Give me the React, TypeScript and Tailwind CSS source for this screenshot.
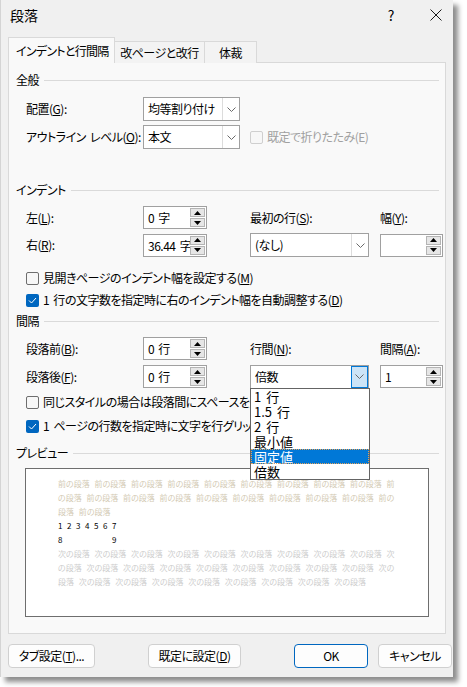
import React from "react";

const UP = (
  <svg width="7" height="4" viewBox="0 0 7 4">
    <path d="M0 4 L3.5 0 L7 4Z" fill="#000" />
  </svg>
);
const DOWN = (
  <svg width="7" height="4" viewBox="0 0 7 4">
    <path d="M0 0 L3.5 4 L7 0Z" fill="#000" />
  </svg>
);

function Chevron() {
  return (
    <svg width="9" height="5" viewBox="0 0 9 5">
      <polyline points="0.5,0.5 4.5,4.5 8.5,0.5" fill="none" stroke="#6a6a6a" strokeWidth="1" />
    </svg>
  );
}

function Spin({ value, w = "w-[64px]" }: { value: string; w?: string }) {
  return (
    <div className={`flex h-[23px] ${w} items-stretch border border-[#a0a0a0] bg-white`}>
      <div className="flex-1 overflow-hidden whitespace-nowrap pl-[4px] leading-[21px]">{value}</div>
      <div className="flex w-[16px] flex-col gap-[1px] py-[1px] pr-[1px]">
        <div className="flex flex-1 items-center justify-center border border-[#b4b4b4] bg-[#e6e6e6]">{UP}</div>
        <div className="flex flex-1 items-center justify-center border border-[#b4b4b4] bg-[#e6e6e6]">{DOWN}</div>
      </div>
    </div>
  );
}

function Select({ value, w, active }: { value: string; w: string; active?: boolean }) {
  return (
    <div className={`flex h-[24px] ${w} items-stretch border border-[#a0a0a0] bg-white`}>
      <div className="flex-1 overflow-hidden whitespace-nowrap pl-[4px] leading-[22px]">{value}</div>
      <div
        className={`flex w-[17px] items-center justify-center ${
          active ? "border border-[#0078d7] bg-[#cce4f7]" : "border-l border-[#dcdcdc]"
        }`}
      >
        <Chevron />
      </div>
    </div>
  );
}

function Check({ checked, disabled, children }: { checked?: boolean; disabled?: boolean; children: React.ReactNode }) {
  return (
    <div className={`flex items-center gap-[4px] whitespace-nowrap ${disabled ? "text-[#a0a0a0]" : ""}`}>
      {checked ? (
        <div className="flex h-[13px] w-[13px] shrink-0 items-center justify-center rounded-[2px] bg-[#0067c0]">
          <svg width="9" height="7" viewBox="0 0 9 7">
            <polyline points="1,3.5 3.5,6 8,1" fill="none" stroke="#fff" strokeWidth="1" />
          </svg>
        </div>
      ) : (
        <div
          className={`h-[13px] w-[13px] shrink-0 rounded-[2px] border bg-[#f7f7f7] ${
            disabled ? "border-[#cfcfcf]" : "border-[#6e6e6e]"
          }`}
        />
      )}
      <span>{children}</span>
    </div>
  );
}

function Heading({ children }: { children: React.ReactNode }) {
  return (
    <div className="flex h-[16px] items-center pl-[7px] pr-[6px]">
      <span className="whitespace-nowrap">{children}</span>
      <div className="ml-[5px] h-px flex-1 bg-[#dadada]" />
    </div>
  );
}

function Btn({ children, primary, w }: { children: React.ReactNode; primary?: boolean; w: string }) {
  return (
    <div
      className={`flex h-[24px] ${w} items-center justify-center whitespace-nowrap rounded-[4px] bg-[#fdfdfd] ${
        primary ? "border-[1.5px] border-[#0067c0]" : "border border-[#d0d0d0]"
      }`}
    >
      {children}
    </div>
  );
}

const MAE = "text-[#d3cab4]";
const TSUGI = "text-[#cdcdcd]";

export default function App() {
  return (
    <div className="h-[687px] w-[467px] bg-white font-['Noto_Sans_CJK_JP',sans-serif] text-[12px] tracking-[-0.5px] text-black [font-feature-settings:'palt'] [word-spacing:2px]">
      <div className="flex h-[677px] w-[453px] flex-col border-l border-[#d4d4d4] bg-[#f0f0f0] shadow-[5px_5px_5px_rgba(0,0,0,0.45)]">
        {/* title bar */}
        <div className="flex h-[37px] items-start pl-[9px] pt-[6px]">
          <span className="text-[14px] leading-[18px] tracking-normal">段落</span>
          <span className="ml-auto mr-[36px] text-[14px] leading-[18px]">?</span>
          <svg className="mr-[11px] mt-[3px]" width="12" height="12" viewBox="0 0 12 12">
            <path d="M0.5 0.5 L11.5 11.5 M11.5 0.5 L0.5 11.5" stroke="#1a1a1a" strokeWidth="1" />
          </svg>
        </div>

        {/* tabs */}
        <div className="relative z-10 -mb-px flex h-[26px] items-end pl-[7px]">
          <div className="flex h-[26px] w-[107px] items-center whitespace-nowrap border border-b-0 border-[#d9d9d9] bg-[#f9f9f9] pl-[7px] tracking-[-0.7px]">
            インデントと行間隔
          </div>
          <div className="flex h-[22px] w-[90px] items-center justify-center whitespace-nowrap border-t border-r border-[#d9d9d9] bg-[#f3f3f3]">
            改ページと改行
          </div>
          <div className="flex h-[22px] w-[52px] items-center justify-center border-t border-r border-[#d9d9d9] bg-[#f3f3f3]">
            体裁
          </div>
        </div>

        {/* panel */}
        <div className="mx-[7px] flex h-[572px] flex-col border border-[#d9d9d9] bg-[#f9f9f9]">
          <div className="mt-[9px]">
            <Heading>全般</Heading>
          </div>
          <div className="mt-[9px] flex h-[24px] items-center pl-[17px]">
            <span className="w-[117px]">
              配置(<u>G</u>):
            </span>
            <Select value="均等割り付け" w="w-[97px]" />
          </div>
          <div className="mt-[4px] flex h-[24px] items-center pl-[17px]">
            <span className="w-[117px] whitespace-nowrap">
              アウトライン レベル(<u>O</u>):
            </span>
            <Select value="本文" w="w-[97px]" />
            <div className="ml-[10px]">
              <Check disabled>既定で折りたたみ(E)</Check>
            </div>
          </div>

          <div className="mt-[33px]">
            <Heading>インデント</Heading>
          </div>
          <div className="mt-[8px] flex h-[23px] items-center pl-[17px]">
            <span className="w-[117px]">
              左(<u>L</u>):
            </span>
            <Spin value="0 字" />
            <span className="ml-[43px] w-[119px]">
              最初の行(<u>S</u>):
            </span>
            <span className="ml-[11px]">
              幅(<u>Y</u>):
            </span>
          </div>
          <div className="mt-[4px] flex h-[24px] items-center pl-[17px]">
            <span className="w-[117px]">
              右(<u>R</u>):
            </span>
            <Spin value="36.44 字" />
            <div className="ml-[43px]">
              <Select value="(なし)" w="w-[119px]" />
            </div>
            <div className="ml-[11px]">
              <Spin value="" w="w-[63px]" />
            </div>
          </div>
          <div className="mt-[10px] flex h-[22px] items-center pl-[17px]">
            <Check>
              見開きページのインデント幅を設定する(<u>M</u>)
            </Check>
          </div>
          <div className="flex h-[22px] items-center pl-[17px]">
            <Check checked>
              1 行の文字数を指定時に右のインデント幅を自動調整する(<u>D</u>)
            </Check>
          </div>

          <div className="mt-[2px]">
            <Heading>間隔</Heading>
          </div>
          <div className="mt-[8px] flex h-[23px] items-center pl-[17px]">
            <span className="w-[117px]">
              段落前(<u>B</u>):
            </span>
            <Spin value="0 行" />
            <span className="ml-[43px] w-[119px]">
              行間(<u>N</u>):
            </span>
            <span className="ml-[11px]">
              間隔(<u>A</u>):
            </span>
          </div>
          <div className="relative z-10 mt-[5px] flex h-[23px] items-center pl-[17px]">
            <span className="w-[117px]">
              段落後(<u>F</u>):
            </span>
            <Spin value="0 行" />
            <div className="relative ml-[43px]">
              <Select value="倍数" w="w-[119px]" active />
              {/* open dropdown list */}
              <div className="absolute left-0 top-[23px] w-[120px] border border-[#646464] bg-white text-[13px] tracking-normal">
                {["1 行", "1.5 行", "2 行", "最小値", "固定値", "倍数"].map((t) => (
                  <div
                    key={t}
                    className={`h-[15px] pl-[3px] leading-[15px] ${
                      t === "固定値"
                        ? "bg-[#0078d7] text-white outline outline-1 -outline-offset-1 outline-dotted outline-[#e3a25a]"
                        : ""
                    }`}
                  >
                    {t}
                  </div>
                ))}
              </div>
            </div>
            <div className="ml-[11px]">
              <Spin value="1" w="w-[63px]" />
            </div>
          </div>
          <div className="mt-[2px] flex h-[24px] items-center overflow-hidden pl-[17px]">
            <Check>
              同じスタイルの場合は段落間にスペースを追加しない(<u>C</u>)
            </Check>
          </div>
          <div className="flex h-[24px] items-center overflow-hidden pl-[17px]">
            <Check checked>
              1 ページの行数を指定時に文字を行グリッド線に合わせる(<u>W</u>)
            </Check>
          </div>

          <div className="mt-[7px]">
            <Heading>プレビュー</Heading>
          </div>
          <div className="mx-[16px] mt-[7px] h-[149px] whitespace-pre border border-[#6e6e6e] bg-white pl-[32px] pt-[8px] text-[8px] leading-[14px] tracking-normal [word-spacing:3px]">
            <div className={MAE}>{"前の段落 ".repeat(9) + "前"}</div>
            <div className={MAE}>{"の段落 " + "前の段落 ".repeat(8) + "前の"}</div>
            <div className={MAE}>{"段落 前の段落"}</div>
            <div className="flex">
              {["1", "2", "3", "4", "5", "6", "7"].map((n) => (
                <span key={n} className="w-[9px]">
                  {n}
                </span>
              ))}
            </div>
            <div className="flex">
              <span className="w-[54px]">8</span>
              <span>9</span>
            </div>
            <div className={TSUGI}>{"次の段落 ".repeat(9) + "次"}</div>
            <div className={TSUGI}>{"の段落 " + "次の段落 ".repeat(8) + "次の"}</div>
            <div className={TSUGI}>{"段落 " + "次の段落 ".repeat(8).trim()}</div>
          </div>
        </div>

        {/* buttons */}
        <div className="mt-[10px] flex items-center pl-[7px]">
          <Btn w="w-[87px]">
            タブ設定(<u>T</u>)...
          </Btn>
          <div className="ml-[53px]">
            <Btn w="w-[93px]">
              既定に設定(<u>D</u>)
            </Btn>
          </div>
          <div className="ml-[53px]">
            <Btn w="w-[74px]" primary>
              OK
            </Btn>
          </div>
          <div className="ml-[10px]">
            <Btn w="w-[74px]">キャンセル</Btn>
          </div>
        </div>
      </div>
    </div>
  );
}
